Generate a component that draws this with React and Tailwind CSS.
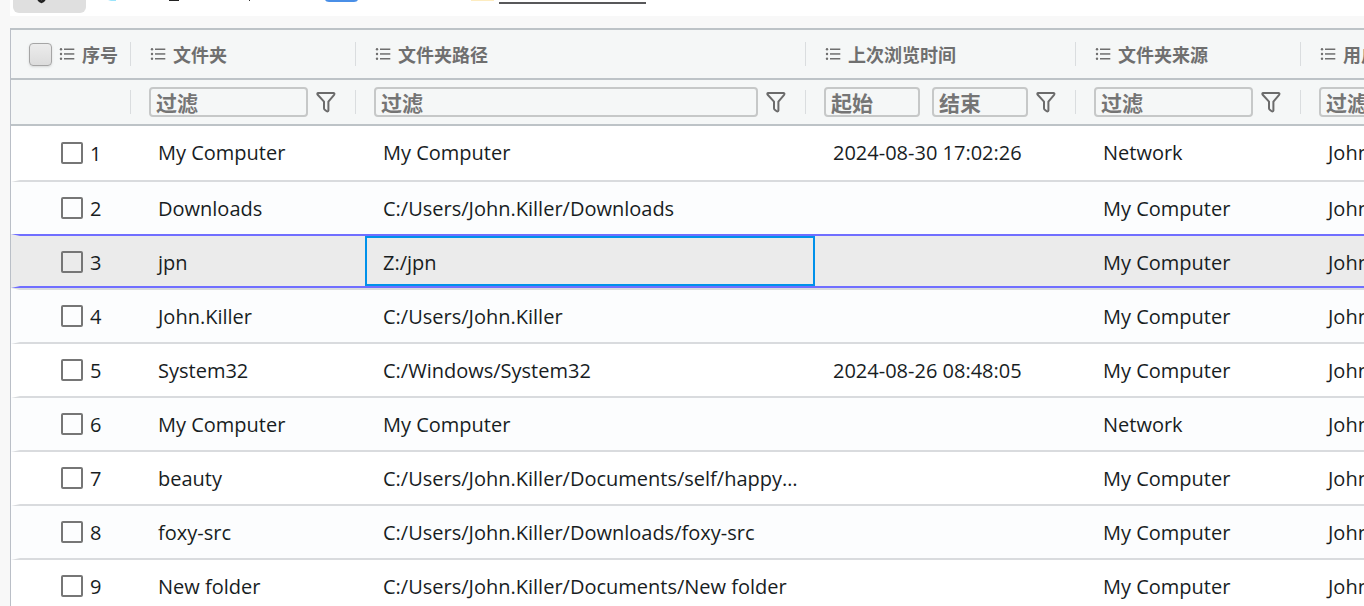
import React from 'react';

const columns = [
    { id: 'no', title: '序号', width: 'w-[120px]', selectAll: true },
    { id: 'folder', title: '文件夹', width: 'w-[225px]', filter: 'text' },
    { id: 'path', title: '文件夹路径', width: 'w-[450px]', filter: 'text' },
    { id: 'visited', title: '上次浏览时间', width: 'w-[270px]', filter: 'range' },
    { id: 'source', title: '文件夹来源', width: 'w-[225px]', filter: 'text' },
    { id: 'user', title: '用户名', width: 'w-[225px]', filter: 'text' },
];

const rows = [
    { folder: 'My Computer', path: 'My Computer', visited: '2024-08-30 17:02:26', source: 'Network', user: 'John.Killer' },
    { folder: 'Downloads', path: 'C:/Users/John.Killer/Downloads', visited: '', source: 'My Computer', user: 'John.Killer' },
    { folder: 'jpn', path: 'Z:/jpn', visited: '', source: 'My Computer', user: 'John.Killer' },
    { folder: 'John.Killer', path: 'C:/Users/John.Killer', visited: '', source: 'My Computer', user: 'John.Killer' },
    { folder: 'System32', path: 'C:/Windows/System32', visited: '2024-08-26 08:48:05', source: 'My Computer', user: 'John.Killer' },
    { folder: 'My Computer', path: 'My Computer', visited: '', source: 'Network', user: 'John.Killer' },
    { folder: 'beauty', path: 'C:/Users/John.Killer/Documents/self/happy-holiday', visited: '', source: 'My Computer', user: 'John.Killer' },
    { folder: 'foxy-src', path: 'C:/Users/John.Killer/Downloads/foxy-src', visited: '', source: 'My Computer', user: 'John.Killer' },
    { folder: 'New folder', path: 'C:/Users/John.Killer/Documents/New folder', visited: '', source: 'My Computer', user: 'John.Killer' },
];

const selectedRow = 2;

function MenuIcon() {
    return (
        <svg className="h-4 w-4 shrink-0" viewBox="0 0 16 16" fill="#6f6f6f" aria-hidden="true">
            <circle cx="2" cy="3.2" r="1.2" />
            <rect x="5" y="2.5" width="10.3" height="1.5" />
            <circle cx="2" cy="8" r="1.2" />
            <rect x="5" y="7.2" width="10.3" height="1.5" />
            <circle cx="2" cy="12.8" r="1.2" />
            <rect x="5" y="12" width="10.3" height="1.5" />
        </svg>
    );
}

function FilterButton({ label }) {
    return (
        <button type="button" aria-label={label} className="shrink-0">
            <svg className="h-6 w-5" viewBox="0 0 20 24" fill="none" stroke="#6b6b6b" strokeWidth="2" strokeLinejoin="round">
                <path d="M2 3 H17.6 Q19 3.2 18.1 4.8 L12.4 11.6 V20.4 Q12 22 10.4 21 L8.8 19.8 Q8 19.2 8 18.2 V11.6 L1.7 4.8 Q0.8 3.2 2 3 Z" />
            </svg>
        </button>
    );
}

function FilterInput({ label, placeholder }) {
    return (
        <input
            type="text"
            aria-label={label}
            placeholder={placeholder}
            className="h-[30px] w-full min-w-0 rounded border-2 border-[#c6c8c8] bg-transparent pl-[5px] pr-1 pt-1 text-[21px] font-bold placeholder:text-[#757575]"
        />
    );
}

function Toolbar() {
    return (
        <div className="flex h-4 items-start bg-white pl-[3px]">
            <button type="button" aria-label="设置" className="h-[13px] w-[73px] rounded-b-md bg-[#dfdfdf]">
                <svg className="mx-auto h-[13px] w-[73px]" viewBox="0 0 73 13" fill="none" stroke="#222" strokeWidth="3">
                    <path d="M25.5 -1 Q28.5 4.5 31.5 -1" />
                </svg>
            </button>
            <svg className="h-3 w-[560px]" viewBox="86 0 560 12" aria-hidden="true">
                <path d="M108 0 H116 V1 H111 Z" fill="#9be4fb" />
                <rect x="169" y="0" width="10" height="1" fill="#222" />
                <rect x="249" y="0" width="1" height="1" fill="#333" />
                <path d="M325 0 H358 Q357 2 354 2 H329 Q326 2 325 0 Z" fill="#4a8fe7" />
                <rect x="471" y="0" width="23" height="1" fill="#fdecc0" />
                <rect x="499" y="2" width="147" height="2" fill="#58585a" />
            </svg>
        </div>
    );
}

function getCellClasses(index, first) {
    const left = first ? 'border-l-[9px] border-l-transparent' : '';
    if (index === 0) return `h-[56px] border-b-2 border-b-[#d9dbde] bg-white ${left}`;
    if (index === selectedRow - 1) return `h-[52px] bg-[#fcfdfe] ${left}`;
    if (index === selectedRow) return `h-[54px] border-y-2 border-y-[#706eff] bg-[#ebebeb] pt-0.5 ${left}`;
    if (index === selectedRow + 1) return `h-[56px] border-y-2 border-y-[#d9dbde] bg-[#fcfdfe] ${left}`;
    return `h-[54px] border-b-2 border-b-[#d9dbde] ${index % 2 ? 'bg-[#fcfdfe]' : 'bg-white'} ${left}`;
}

export default function App() {
    return (
        <div className="h-screen overflow-hidden bg-[#f8f8f8] pl-2.5 font-['Open_Sans','Noto_Sans_CJK_SC',sans-serif]">
            <Toolbar />

            <div className="mt-3 overflow-hidden border-l border-t-2 border-l-[#babfc7] border-t-[#bdc3c7]">
                <table className="w-[1515px] table-fixed border-separate border-spacing-0 text-[20px] text-[#181d1f]">
                    <thead className="bg-[#f5f7f7] text-[#6f6f6f]">
                        {/* Titles */}
                        <tr>
                            {columns.map((col) => (
                                <th key={col.id} className={`${col.width} h-[50px] border-b-2 border-[#bdc3c7] p-0 text-left text-[18px] font-bold`}>
                                    <div className={`flex h-6 items-center border-r border-[#dadddf] ${col.selectAll ? 'pl-[18px]' : 'pl-[19px]'}`}>
                                        {col.selectAll && (
                                            <input
                                                type="checkbox"
                                                aria-label="全选"
                                                className="mr-[7px] h-[23px] w-[23px] shrink-0 appearance-none rounded border border-[#a5a5a5] bg-gradient-to-b from-[#ececec] to-[#dcdcdc] shadow-sm"
                                            />
                                        )}
                                        <MenuIcon />
                                        <span className="ml-[7px] whitespace-nowrap pt-0.5">{col.title}</span>
                                    </div>
                                </th>
                            ))}
                        </tr>
                        {/* Filters */}
                        <tr>
                            {columns.map((col) => (
                                <th key={col.id} className="h-[46px] border-b-2 border-[#bdc3c7] p-0">
                                    <div className="flex h-6 items-center gap-2 border-r border-[#dadddf] pl-[18px] pr-[19px]">
                                        {col.filter === 'text' && <FilterInput label={col.title} placeholder="过滤" />}
                                        {col.filter === 'range' && (
                                            <div className="flex min-w-0 flex-1 gap-3">
                                                <FilterInput label={`${col.title} 起始`} placeholder="起始" />
                                                <FilterInput label={`${col.title} 结束`} placeholder="结束" />
                                            </div>
                                        )}
                                        {col.filter && <FilterButton label={`${col.title} 过滤`} />}
                                    </div>
                                </th>
                            ))}
                        </tr>
                    </thead>
                    <tbody>
                        {rows.map((row, index) => (
                            <tr key={index}>
                                <td className={`p-0 ${getCellClasses(index, true)}`}>
                                    <label className="flex items-center gap-[7px] pl-[41px]">
                                        <input
                                            type="checkbox"
                                            className="h-[22px] w-[22px] appearance-none rounded-[2px] border-2 border-[#767676]"
                                        />
                                        <span className="pt-0.5">{index + 1}</span>
                                    </label>
                                </td>
                                {columns.slice(1).map((col) => {
                                    const focused = index === selectedRow && col.id === 'path';
                                    return (
                                        <td key={col.id} className={`p-0 ${focused ? 'relative z-10' : ''} ${getCellClasses(index, false)}`}>
                                            <div className={`truncate pl-[27px] pr-[5px] ${index === 0 ? '' : 'pt-0.5'}`}>{row[col.id]}</div>
                                            {focused && (
                                                <div className="absolute inset-y-0 -right-[9px] left-[9px] border-2 border-[#0091ea]" />
                                            )}
                                        </td>
                                    );
                                })}
                            </tr>
                        ))}
                    </tbody>
                </table>
            </div>
        </div>
    );
}
